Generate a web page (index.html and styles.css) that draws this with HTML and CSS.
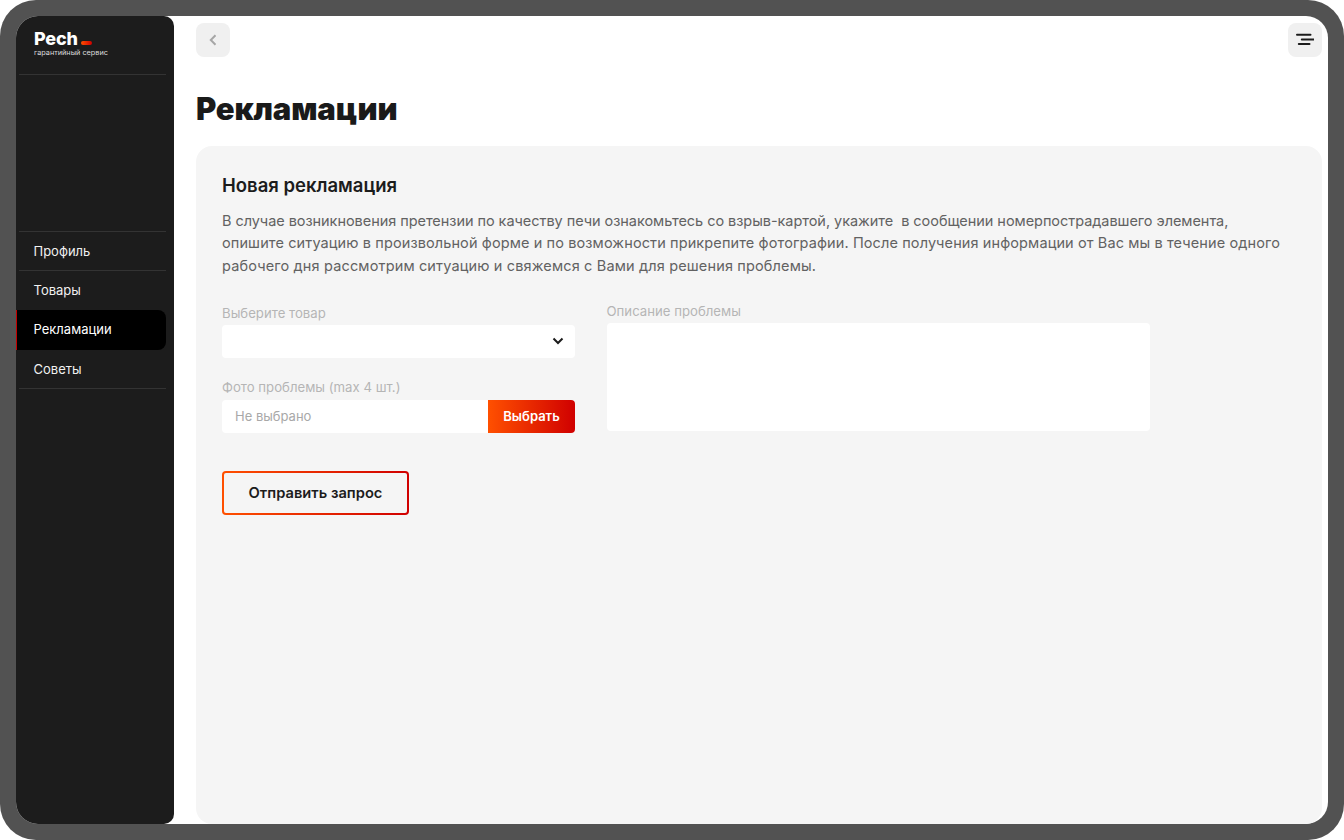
FILE: index.html
```html
<!DOCTYPE html>
<html lang="ru">
<head>
<meta charset="utf-8">
<title>Рекламации</title>
<link rel="stylesheet" href="styles.css">
</head>
<body>
<div class="device">
  <div class="screen">
    <aside class="sidebar">
      <div class="brand">
        <div class="logo">Pech<span class="logo-dash"></span></div>
        <div class="tagline">гарантийный сервис</div>
      </div>
      <nav class="nav">
        <a class="nav-item">Профиль</a>
        <a class="nav-item">Товары</a>
        <a class="nav-item active">Рекламации</a>
        <a class="nav-item last">Советы</a>
      </nav>
    </aside>
    <main class="main">
      <div class="topbar">
        <button class="icon-btn">
          <svg width="10" height="12" viewBox="0 0 10 12"><path d="M7.500 1.200 2.800 6l4.700 4.800" fill="none" stroke="#a6a6a6" stroke-width="2"/></svg>
        </button>
        <button class="icon-btn">
          <svg width="18" height="14" viewBox="0 0 18 14"><path d="M1 1.700h13.500M5.800 6.500h11.700M2.800 11h10.700" fill="none" stroke="#1c1c1c" stroke-width="2" stroke-linecap="round"/></svg>
        </button>
      </div>
      <h1 class="title">Рекламации</h1>
      <section class="card">
        <h2 class="card-title">Новая рекламация</h2>
        <p class="intro"><span class="line line-a">В случае возникновения претензии по качеству печи ознакомьтесь со взрыв-картой, укажите &nbsp;в сообщении номерпострадавшего элемента,</span><span class="line line-b">опишите ситуацию в произвольной форме и по возможности прикрепите фотографии. После получения информации от Вас мы в течение одного</span><span class="line line-c">рабочего дня рассмотрим ситуацию и свяжемся с Вами для решения проблемы.</span></p>
        <div class="form">
          <div class="col-left">
            <label class="label">Выберите товар</label>
            <div class="select">
              <svg width="12" height="8" viewBox="0 0 12 8"><path d="M1.500 1.500 6 6l4.500-4.500" fill="none" stroke="#1c1c1c" stroke-width="2"/></svg>
            </div>
            <label class="label second">Фото проблемы (max 4 шт.)</label>
            <div class="file">
              <span class="file-name">Не выбрано</span>
              <span class="file-btn">Выбрать</span>
            </div>
          </div>
          <div class="col-right">
            <label class="label">Описание проблемы</label>
            <div class="textarea"></div>
          </div>
        </div>
        <button class="submit">Отправить запрос</button>
      </section>
    </main>
  </div>
</div>
</body>
</html>
```
FILE: styles.css
```css
* { box-sizing: border-box; }
html, body { margin: 0; padding: 0; background: #fff; }
body { font-family: "Inter", "Open Sans", sans-serif; color: #1c1c1c; }
.device { width: 1344px; height: 840px; padding: 16px; background: #525252; border-radius: 36px; overflow: hidden; }
.screen { display: flex; height: 808px; background: #fff; border-radius: 22px; overflow: hidden; }
.sidebar { width: 157.500px; flex: none; background: #1c1c1c; border-radius: 0 10px 10px 0; display: flex; flex-direction: column; color: #f2f2f2; }
.brand { height: 59px; margin-left: 3px; width: 147px; border-bottom: 1px solid #333; padding: 13px 0 0 15px; }
.logo { font-weight: 800; font-size: 18px; line-height: 19px; color: #fff; display: flex; align-items: flex-end; letter-spacing: -0.2px; }
.logo-dash { width: 11px; height: 4px; margin: 0 0 3.500px 3px; border-radius: 2px; background: linear-gradient(90deg, #ff5000, #d00000); }
.tagline { font-size: 7.300px; line-height: 10px; margin-top: 0; color: #ddd; }
.nav { margin-top: 156px; display: flex; flex-direction: column; }
.nav-item { display: block; height: 39px; margin-left: 3px; width: 147px; padding-left: 14.500px; border-top: 1px solid #333; font-size: 13px; line-height: 38px; color: #f0f0f0; }
.nav-item.active { margin-left: 0; margin-top: 1px; height: 39.500px; width: 150px; padding-left: 16.500px; background: #000; border-top: 0; border-left: 1px solid #c40000; border-radius: 0 8px 8px 0; line-height: 39.500px; color: #fff; }
.nav-item.active + .nav-item { border-top: 0; }
.nav-item.last { border-bottom: 1px solid #333; }
.main { flex: 1; min-width: 0; padding: 7px 6.500px 0 22.500px; display: flex; flex-direction: column; }
.topbar { display: flex; justify-content: space-between; }
.icon-btn { width: 33.500px; height: 33.500px; padding: 0; border: 0; border-radius: 8px; background: #f0f0f0; display: flex; align-items: center; justify-content: center; }
.title { margin: 33px 0 0; font-size: 31px; line-height: 38px; font-weight: 900; color: #1a1a1a; letter-spacing: -0.15px; }
.card { flex: 1; margin-top: 18.500px; background: #f5f5f5; border-radius: 16px; padding: 27px 26px 0; }
.card-title { margin: 0; font-size: 18.500px; line-height: 24px; font-weight: 600; color: #1c1c1c; }
.intro { margin: 12.500px 0 0; font-size: 14.500px; line-height: 22.500px; color: #626262; white-space: nowrap; }
.line { display: block; }
.line-a { letter-spacing: -0.05px; }
.line-b { letter-spacing: 0.11px; }
.line-c { letter-spacing: 0.15px; }
.form { display: flex; gap: 31.500px; margin-top: 27.500px; }
.col-left { width: 353px; }
.col-right { width: 543.500px; margin-top: -2px; }
.label { display: block; font-size: 13.200px; line-height: 16px; color: #b5b5b5; }
.second { margin-top: 21px; }
.select { height: 33.500px; margin-top: 4px; background: #fff; border-radius: 4px; display: flex; align-items: center; justify-content: flex-end; padding-right: 11px; }
.file { height: 33px; margin-top: 5px; background: #fff; border-radius: 4px; display: flex; justify-content: space-between; overflow: hidden; }
.file-name { font-size: 13px; line-height: 33px; padding-left: 13px; color: #a8a8a8; }
.file-btn { width: 87px; text-align: center; font-size: 13px; font-weight: 600; line-height: 33px; color: #fff; background: linear-gradient(90deg, #ff5000, #d00000); }
.textarea { height: 108px; margin-top: 4px; background: #fff; border-radius: 4px; }
.submit { display: block; width: 187px; height: 44.500px; margin-top: 37.500px; padding: 0; border: 2px solid transparent; border-radius: 4px; background: linear-gradient(#f5f5f5, #f5f5f5) padding-box, linear-gradient(90deg, #ff5000, #d00000) border-box; font-family: inherit; font-size: 14.700px; font-weight: 600; color: #1c1c1c; }
```
